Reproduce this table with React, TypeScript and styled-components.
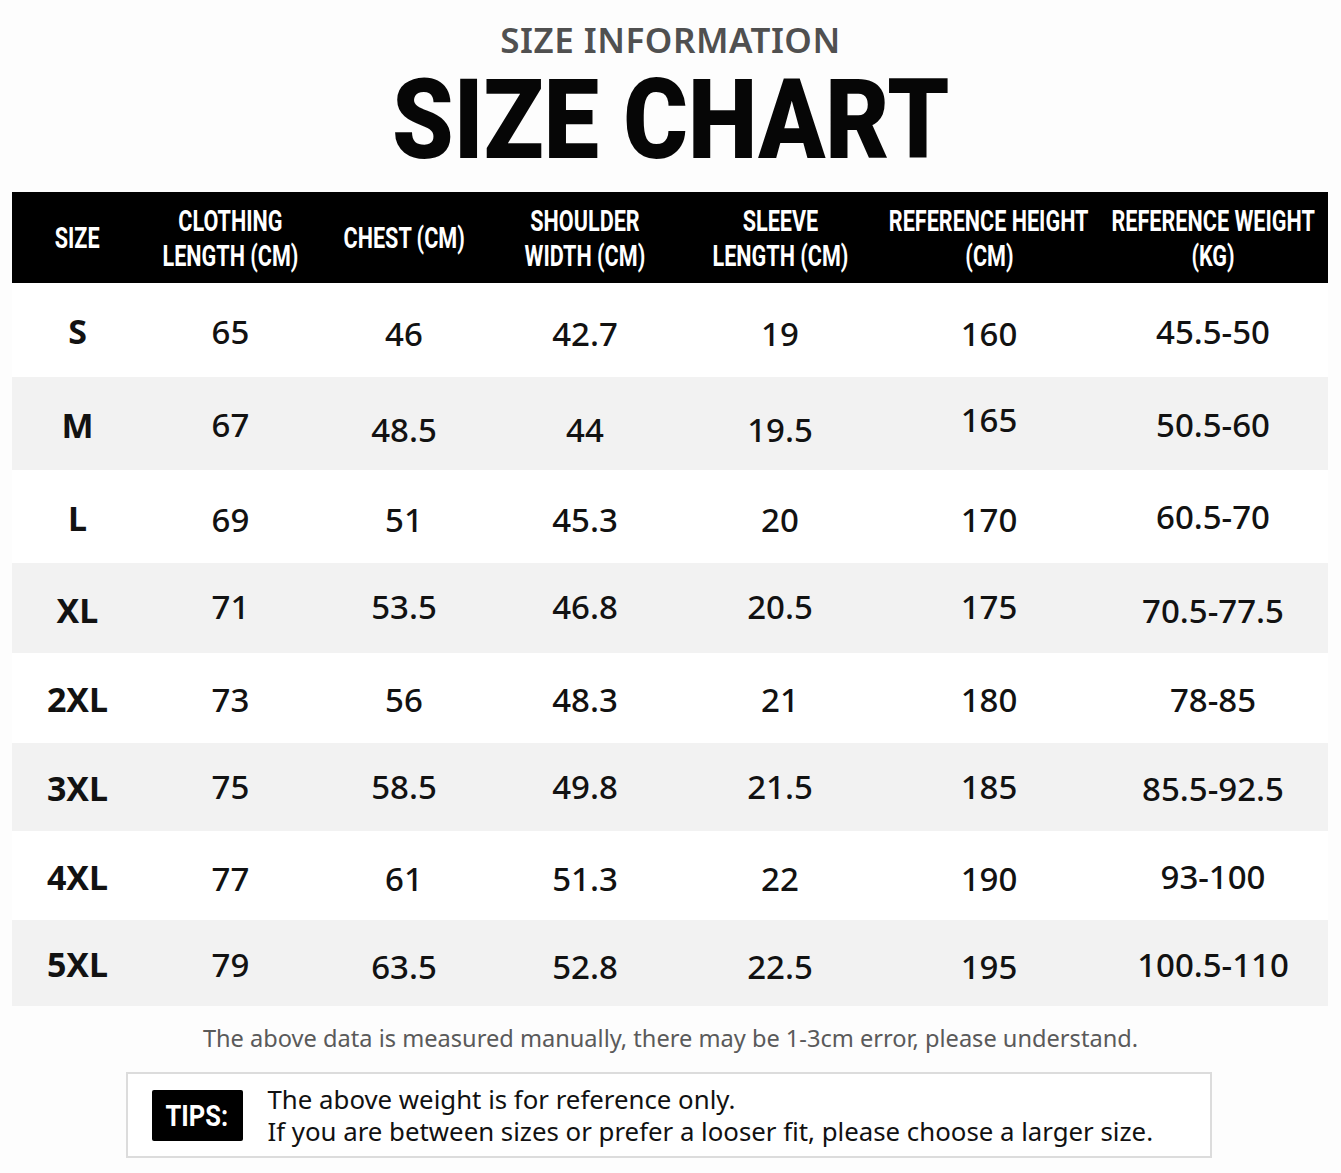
import styled, { createGlobalStyle } from 'styled-components';

const GlobalStyle = createGlobalStyle`
  html, body {
    margin: 0;
    padding: 0;
    background: #fdfdfd;
  }
  body {
    font-family: 'Noto Sans', 'Open Sans', sans-serif;
    color: #111;
  }
`;

const _columns = [
  ['SIZE'],
  ['CLOTHING', 'LENGTH (CM)'],
  ['CHEST (CM)'],
  ['SHOULDER', 'WIDTH (CM)'],
  ['SLEEVE', 'LENGTH (CM)'],
  ['REFERENCE HEIGHT', '(CM)'],
  ['REFERENCE WEIGHT', '(KG)'],
];

// each row: height in px, cells, small vertical nudge per cell
const _rows: { h: number; cells: string[]; dy: number[] }[] = [
  { h: 94, cells: ['S', '65', '46', '42.7', '19', '160', '45.5-50'], dy: [1, 1, 3, 3, 3, 3, 1] },
  { h: 93, cells: ['M', '67', '48.5', '44', '19.5', '165', '50.5-60'], dy: [1, 1, 6, 6, 6, -4, 1] },
  { h: 93, cells: ['L', '69', '51', '45.3', '20', '170', '60.5-70'], dy: [1, 3, 3, 3, 3, 3, 0] },
  { h: 90, cells: ['XL', '71', '53.5', '46.8', '20.5', '175', '70.5-77.5'], dy: [2, -2, -2, -2, -2, -2, 2] },
  { h: 90, cells: ['2XL', '73', '56', '48.3', '21', '180', '78-85'], dy: [1, 1, 1, 1, 1, 1, 1] },
  { h: 88, cells: ['3XL', '75', '58.5', '49.8', '21.5', '185', '85.5-92.5'], dy: [1, -1, -1, -1, -1, -1, 1] },
  { h: 89, cells: ['4XL', '77', '61', '51.3', '22', '190', '93-100'], dy: [1, 3, 3, 3, 3, 3, 1] },
  { h: 86, cells: ['5XL', '79', '63.5', '52.8', '22.5', '195', '100.5-110'], dy: [1, 1, 3, 3, 3, 3, 1] },
];

export default function App() {
  return (
    <Page>
      <GlobalStyle />
      <Heading>
        <SubTitle>SIZE INFORMATION</SubTitle>
        <Title>
          <Squeeze $scale={0.88}>SIZE CHART</Squeeze>
        </Title>
      </Heading>

      <Table>
        <HeaderRow>
          {_columns.map((lines) => (
            <HeaderCell key={lines.join()}>
              {lines.map((l) => (
                <Squeeze key={l} $scale={0.72}>
                  {l}
                </Squeeze>
              ))}
            </HeaderCell>
          ))}
        </HeaderRow>
        {_rows.map((row, idx) => (
          <DataRow key={row.cells[0]} $h={row.h} $shade={idx % 2 === 1}>
            {row.cells.map((c, i) => (
              <DataCell key={i} $bold={i === 0} $dy={row.dy[i]}>
                {c}
              </DataCell>
            ))}
          </DataRow>
        ))}
      </Table>

      <Note>The above data is measured manually, there may be 1-3cm error, please understand.</Note>

      <TipsBox>
        <TipsBadge>
          <Squeeze $scale={0.85}>TIPS:</Squeeze>
        </TipsBadge>
        <TipsText>
          <div>The above weight is for reference only.</div>
          <div>If you are between sizes or prefer a looser fit, please choose a larger size.</div>
        </TipsText>
      </TipsBox>
    </Page>
  );
}

const Page = styled.div`
  width: 1341px;
  height: 1173px;
  padding-top: 20px;
  box-sizing: border-box;
  display: flex;
  flex-direction: column;
  align-items: center;
  overflow: hidden;
`;

const Heading = styled.div`
  display: flex;
  flex-direction: column;
  align-items: center;
`;

const SubTitle = styled.div`
  font-family: 'Noto Sans', sans-serif;
  font-weight: 600;
  font-size: 35px;
  line-height: 40px;
  color: #505050;
  letter-spacing: 0.5px;
`;

const Title = styled.div`
  font-family: Roboto, sans-serif;
  font-weight: 900;
  font-size: 112px;
  line-height: 100px;
  height: 100px;
  color: #060606;
  margin-top: 10px;
`;

const Squeeze = styled.span<{ $scale: number }>`
  display: inline-block;
  white-space: nowrap;
  transform: scaleX(${(p) => p.$scale});
  transform-origin: center;
`;

const Table = styled.div`
  width: 1316px;
  margin-top: 22px;
  align-self: flex-start;
  margin-left: 12px;
  display: flex;
  flex-direction: column;
`;

const grid = `
  display: grid;
  grid-template-columns: 131px 175px 172px 190px 200px 218px 230px;
`;

const HeaderRow = styled.div`
  ${grid}
  height: 91px;
  background: #000;
`;

const HeaderCell = styled.div`
  display: flex;
  flex-direction: column;
  align-items: center;
  justify-content: center;
  color: #fff;
  font-family: Roboto, sans-serif;
  font-weight: 700;
  font-size: 30px;
  line-height: 35px;
`;

const DataRow = styled.div<{ $h: number; $shade: boolean }>`
  ${grid}
  height: ${(p) => p.$h}px;
  background: ${(p) => (p.$shade ? '#f2f2f2' : '#ffffff')};
`;

const DataCell = styled.div<{ $bold: boolean; $dy: number }>`
  display: flex;
  align-items: center;
  justify-content: center;
  font-family: 'Noto Sans', sans-serif;
  font-size: ${(p) => (p.$bold ? 34 : 33)}px;
  font-weight: ${(p) => (p.$bold ? 700 : 500)};
  color: #121212;
  transform: translateY(${(p) => p.$dy}px);
`;

const Note = styled.div`
  margin-top: 17px;
  font-family: 'Noto Sans', sans-serif;
  font-size: 23.6px;
  line-height: 30px;
  color: #5a5a5a;
`;

const TipsBox = styled.div`
  margin-top: 19px;
  width: 1086px;
  height: 86px;
  box-sizing: border-box;
  border: 2px solid #dcdcdc;
  background: #fff;
  display: flex;
  align-items: center;
  padding-left: 24px;
  gap: 25px;
  margin-left: -4px;
`;

const TipsBadge = styled.div`
  width: 91px;
  height: 51px;
  flex-shrink: 0;
  background: #000;
  border-radius: 2px;
  display: flex;
  align-items: center;
  justify-content: center;
  color: #fff;
  font-family: Roboto, sans-serif;
  font-weight: 700;
  font-size: 30px;
`;

const TipsText = styled.div`
  font-family: 'Noto Sans', sans-serif;
  font-size: 25.8px;
  line-height: 32px;
  color: #111;
`;
